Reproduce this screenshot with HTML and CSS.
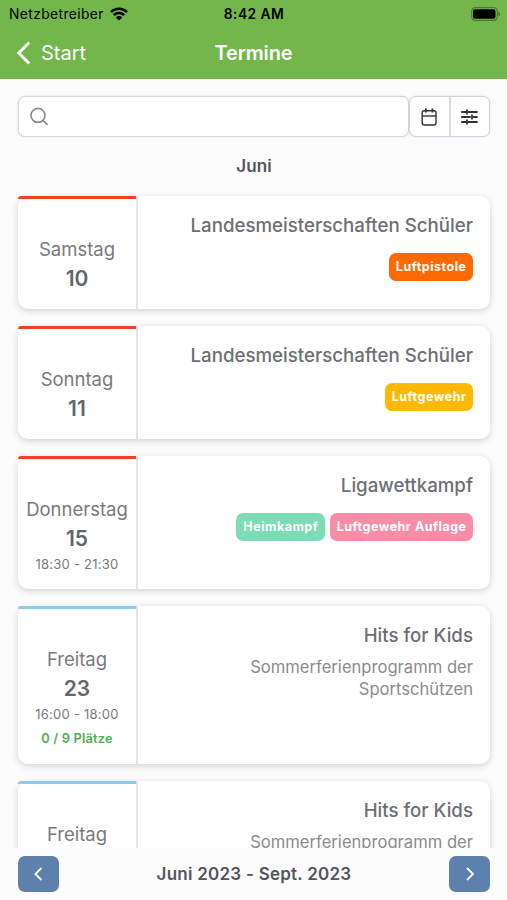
FILE: index.html
```html
<!DOCTYPE html>
<html lang="de">
<head>
<meta charset="utf-8">
<title>Termine</title>
<link rel="stylesheet" href="styles.css">
</head>
<body>
<div class="app">
  <header class="header">
    <div class="status">
      <div class="carrier"><span>Netzbetreiber</span>
        <svg class="wifi" width="18" height="14" viewBox="0 0 18 14"><g fill="none" stroke="#000" stroke-width="2.5"><path d="M1 5.1a11.3 11.3 0 0 1 16 0"/><path d="M3.8 8.2a7.4 7.4 0 0 1 10.4 0"/></g><path d="M9 13.6 5.8 10.4a4.5 4.5 0 0 1 6.4 0Z"/></svg>
      </div>
      <span class="clock">8:42 AM</span>
      <svg class="battery" width="30" height="14" viewBox="0 0 30 14"><rect x=".7" y=".7" width="25.6" height="12.6" rx="3.6" fill="none" stroke="#4b7832" stroke-width="1.2"/><rect x="2" y="2.3" width="22.5" height="9.4" rx="2"/><path d="M27.5 4.8c2 .8 2 3.6 0 4.4Z" fill="#40672b"/></svg>
    </div>
    <nav class="nav">
      <a class="back"><svg width="16" height="26" viewBox="0 0 16 26"><path d="M13.2 2.5 2.8 13l10.4 10.5" fill="none" stroke="#fff" stroke-width="3"/></svg><span>Start</span></a>
      <h1>Termine</h1>
      <span></span>
    </nav>
  </header>
  <main class="content">
    <div class="toolbar">
      <div class="search"><svg width="20" height="20" viewBox="0 0 20 20" fill="none" stroke="#85888b" stroke-width="1.6"><circle cx="8" cy="8.4" r="7"/><path d="m13 13.5 4.6 4.4"/></svg></div>
      <div class="tools">
        <button><svg width="18" height="20" viewBox="0 0 18 20" fill="none" stroke="#303236" stroke-width="1.4"><rect x="2.2" y="3.7" width="13.8" height="14.3" rx="2"/><path d="M2.2 9h14"/><path d="M5.8 1.5v4M12.4 1.5v4" stroke-width="1.8"/></svg></button>
        <button><svg width="20" height="20" viewBox="0 0 20 20" fill="none" stroke="#303236" stroke-width="1.8"><path d="M1.2 5h5.2M7.9 5h9.7M1.2 10h9.5M12.9 10h4.7M1.2 15h5.2M7.9 15h9.7"/><path d="M7 2.6v4.8M12 7.6v4.8M7 12.6v4.8"/></svg></button>
      </div>
    </div>
    <h2>Juni</h2>
    <section class="list">
      <article class="card">
        <div class="date red"><span class="day">Samstag</span><strong>10</strong></div>
        <div class="info"><h3>Landesmeisterschaften Schüler</h3><div class="tags"><span class="tag orange">Luftpistole</span></div></div>
      </article>
      <article class="card">
        <div class="date red"><span class="day">Sonntag</span><strong>11</strong></div>
        <div class="info"><h3>Landesmeisterschaften Schüler</h3><div class="tags"><span class="tag yellow">Luftgewehr</span></div></div>
      </article>
      <article class="card medium">
        <div class="date red"><span class="day">Donnerstag</span><strong>15</strong><span class="time">18:30 - 21:30</span></div>
        <div class="info"><h3>Ligawettkampf</h3><div class="tags"><span class="tag green">Heimkampf</span><span class="tag pink">Luftgewehr Auflage</span></div></div>
      </article>
      <article class="card tall">
        <div class="date blue"><span class="day">Freitag</span><strong>23</strong><span class="time">16:00 - 18:00</span><span class="places">0 / 9 Plätze</span></div>
        <div class="info"><h3>Hits for Kids</h3><p>Sommerferienprogramm der Sportschützen</p></div>
      </article>
      <article class="card tall">
        <div class="date blue"><span class="day">Freitag</span></div>
        <div class="info"><h3>Hits for Kids</h3><p>Sommerferienprogramm der</p></div>
      </article>
    </section>
  </main>
  <footer class="footer">
    <button><svg width="12" height="16" viewBox="0 0 12 16"><path d="M8.4 2 2.4 8l6 6"/></svg></button>
    <span>Juni 2023 - Sept. 2023</span>
    <button><svg width="12" height="16" viewBox="0 0 12 16"><path d="m3 2 6 6-6 6"/></svg></button>
  </footer>
</div>
</body>
</html>
```
FILE: styles.css
```css
* { box-sizing: border-box; }
body { margin: 0; font-family: Inter, "Liberation Sans", sans-serif; color: #6c6f75; }
h1, h2, h3, p { margin: 0; }
button { padding: 0; border: 0; display: flex; align-items: center; justify-content: center; }
svg { display: block; flex: none; }
.app { height: 900px; display: flex; flex-direction: column; overflow: hidden; background: #fcfcfd; }
.header { height: 79px; flex: none; background: #73b64c; }
.status { height: 27px; padding: 0 6px 0 9px; display: grid; grid-template-columns: 1fr auto 1fr; align-items: center; color: #000; }
.carrier { display: flex; align-items: center; gap: 6px; font-size: 13.8px; letter-spacing: .4px; }
.clock { font-size: 13.8px; font-weight: 600; letter-spacing: .45px; margin-right: 2px; }
.battery { justify-self: end; }
.nav { height: 52px; padding: 0 16px; display: grid; grid-template-columns: 1fr auto 1fr; align-items: center; color: #fff; }
.back { display: flex; align-items: center; gap: 9px; font-size: 20px; }
.nav h1 { font-size: 20px; font-weight: 600; letter-spacing: -.15px; }
.content { flex: 1; min-height: 0; overflow: hidden; padding: 17px 17px 0 18px; }
.toolbar { display: flex; height: 41px; }
.search { flex: 1; border: 1px solid #d5d6da; border-radius: 7px; background: #fff; display: flex; align-items: center; padding-left: 11px; box-shadow: 0 0 2px #d9dae2; }
.tools { display: flex; width: 81px; border: 1px solid #d3d4db; border-radius: 7px; background: #fff; box-shadow: 0 0 2px #d9dae2; }
.tools button { flex: 1; background: none; }
.tools button + button { border-left: 2px solid #d9dae2; }
.content h2 { height: 59px; line-height: 58px; text-align: center; font-size: 17px; font-weight: 600; letter-spacing: .1px; color: #53555c; }
.list { display: flex; flex-direction: column; gap: 17px; }
.card { height: 113px; flex: none; display: flex; border-radius: 10px; background: #fff; box-shadow: 0 2px 7px rgba(0, 0, 0, .17); }
.card.medium { height: 133px; }
.card.tall { height: 158px; }
.date { width: 120px; flex: none; border-right: 2px solid #e5e5e7; display: flex; flex-direction: column; align-items: center; padding-top: 40px; position: relative; }
.date::before { content: ""; position: absolute; left: 0; top: 0; width: 118px; height: 2.5px; border-radius: 3px 0 0; background: #ed4326; }
.date.blue::before { background: #8bcaf1; }
.day { font-size: 18.5px; line-height: 27px; color: #777a7f; }
.date strong { font-size: 21px; line-height: 31px; font-weight: 600; color: #63666b; }
.time { font-size: 13px; line-height: 21px; letter-spacing: .25px; color: #777a7f; }
.places { font-size: 12.8px; line-height: 28px; font-weight: 600; letter-spacing: .2px; color: #4caf50; }
.info { flex: 1; padding: 16px 17px 0 0; text-align: right; display: flex; flex-direction: column; align-items: flex-end; }
.info h3 { font-size: 18.7px; line-height: 28px; font-weight: 500; white-space: nowrap; }
.info p { width: 240px; margin-top: 6px; font-size: 16.6px; line-height: 22px; color: #898c90; }
.tags { display: flex; gap: 5px; margin-top: 13px; }
.tag { height: 28px; padding: 0 6.5px 0 7px; border-radius: 7px; font-size: 12.5px; font-weight: 700; line-height: 27px; letter-spacing: .5px; color: #fff; white-space: nowrap; }
.orange { background: #ff6900; }
.yellow { background: #fcb900; }
.green { background: #7bdcb5; }
.pink { background: #f78da7; }
.footer { height: 52px; flex: none; padding: 0 17px 0 18px; display: flex; align-items: center; justify-content: space-between; background: #fcfcfd; font-size: 17px; letter-spacing: .25px; font-weight: 600; color: #53555c; }
.footer button { width: 41px; height: 36px; border-radius: 7px; background: #5d80ad; }
.footer path { fill: none; stroke: #fff; stroke-width: 1.8; }
```
